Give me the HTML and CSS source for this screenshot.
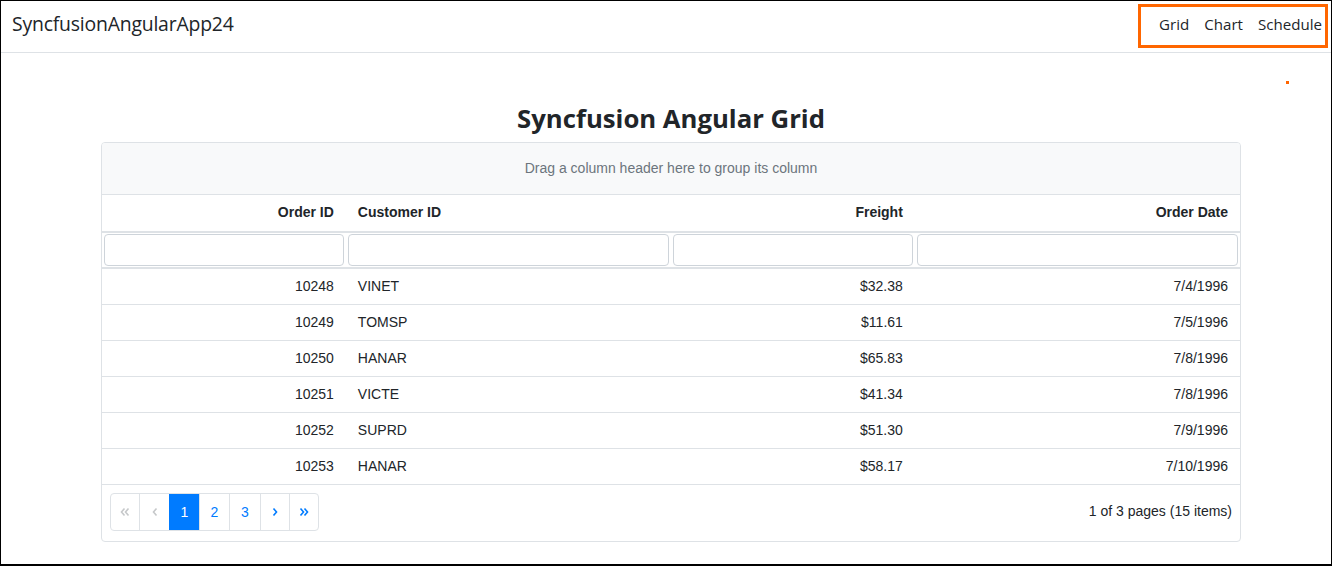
FILE: index.html
```html
<!DOCTYPE html>
<html lang="en">
<head>
<meta charset="utf-8">
<title>SyncfusionAngularApp24</title>
<link rel="stylesheet" href="styles.css">
</head>
<body>
<div class="frame">
  <header class="navbar">
    <a class="brand" href="#">SyncfusionAngularApp24</a>
    <ul class="nav">
      <li><a href="#">Grid</a></li>
      <li><a href="#">Chart</a></li>
      <li><a href="#">Schedule</a></li>
    </ul>
    <span class="dot"></span>
  </header>
  <main class="container">
    <h1 class="title">Syncfusion Angular Grid</h1>
    <div class="grid">
      <div class="group-drop">Drag a column header here to group its column</div>
      <table class="table">
        <colgroup>
          <col class="c3"><col class="c4"><col class="c3"><col class="c4">
        </colgroup>
        <thead>
          <tr class="head-row">
            <th class="r">Order ID</th>
            <th class="l">Customer ID</th>
            <th class="r">Freight</th>
            <th class="r">Order Date</th>
          </tr>
          <tr class="filter-row">
            <td><div class="input"></div></td>
            <td><div class="input"></div></td>
            <td><div class="input"></div></td>
            <td><div class="input"></div></td>
          </tr>
        </thead>
        <tbody>
          <tr><td class="r">10248</td><td class="l">VINET</td><td class="r">$32.38</td><td class="r">7/4/1996</td></tr>
          <tr><td class="r">10249</td><td class="l">TOMSP</td><td class="r">$11.61</td><td class="r">7/5/1996</td></tr>
          <tr><td class="r">10250</td><td class="l">HANAR</td><td class="r">$65.83</td><td class="r">7/8/1996</td></tr>
          <tr><td class="r">10251</td><td class="l">VICTE</td><td class="r">$41.34</td><td class="r">7/8/1996</td></tr>
          <tr><td class="r">10252</td><td class="l">SUPRD</td><td class="r">$51.30</td><td class="r">7/9/1996</td></tr>
          <tr><td class="r">10253</td><td class="l">HANAR</td><td class="r">$58.17</td><td class="r">7/10/1996</td></tr>
        </tbody>
      </table>
      <div class="pager">
        <div class="pages">
          <span class="pg dis first"><svg width="10" height="10" viewBox="0 0 10 10"><polyline points="4.5,1.5 1.5,5 4.5,8.5" /><polyline points="8.5,1.5 5.5,5 8.5,8.5" /></svg></span>
          <span class="pg dis"><svg width="10" height="10" viewBox="0 0 10 10"><polyline points="6.5,1.5 3.5,5 6.5,8.5" /></svg></span>
          <span class="pg active">1</span>
          <span class="pg">2</span>
          <span class="pg wide">3</span>
          <span class="pg narrow"><svg width="10" height="10" viewBox="0 0 10 10"><polyline points="3.5,1.5 6.5,5 3.5,8.5" /></svg></span>
          <span class="pg narrow"><svg width="10" height="10" viewBox="0 0 10 10"><polyline points="1.5,1.5 4.5,5 1.5,8.5" /><polyline points="5.5,1.5 8.5,5 5.5,8.5" /></svg></span>
        </div>
        <div class="info">1 of 3 pages (15 items)</div>
      </div>
    </div>
  </main>
</div>
</body>
</html>
```

FILE: styles.css
```css
* { box-sizing: border-box; }
html, body { margin: 0; padding: 0; background: #fff; }
body {
  font-family: "Open Sans", "Noto Sans", sans-serif;
  color: #212529;
}
.frame {
  width: 1332px;
  height: 566px;
  border: 1px solid #000;
  border-bottom-width: 2px;
  overflow: hidden;
}
.navbar {
  position: relative;
  height: 52px;
  border-bottom: 1px solid #dee2e6;
  display: flex;
  align-items: flex-start;
  justify-content: space-between;
  padding: 3px 3px 0 11px;
}
.brand {
  font-size: 19.4px;
  line-height: 40px;
  color: #212529;
  text-decoration: none;
  letter-spacing: -0.2px;
}
.nav {
  list-style: none;
  margin: 0;
  padding: 0 0 4px 0;
  width: 190px;
  height: 44px;
  border: 3px solid #ff6600;
  display: flex;
  align-items: center;
  justify-content: flex-end;
}
.nav a {
  display: block;
  padding: 0 7.5px;
  font-size: 15.1px;
  color: #212529;
  text-decoration: none;
}
.nav li:last-child a { padding-right: 3px; }
.dot {
  position: absolute;
  left: 1285px;
  top: 80px;
  width: 3px;
  height: 3px;
  background: #ff6600;
}
.container {
  width: 1140px;
  margin-left: 100px;
}
.title {
  margin: 0;
  padding-top: 49px;
  height: 89px;
  text-align: center;
  font-size: 25.7px;
  line-height: 34px;
  font-weight: 700;
  color: #212529;
}
.grid {
  border: 1px solid #dee2e6;
  border-radius: 4px;
  font-family: "Liberation Sans", Arial, sans-serif;
  font-size: 14px;
  overflow: hidden;
}
.group-drop {
  height: 52px;
  background: #f8f9fa;
  border-bottom: 1px solid #dee2e6;
  color: #6c757d;
  text-align: center;
  line-height: 50px;
}
.table {
  width: 100%;
  border-collapse: collapse;
  table-layout: fixed;
}
.c3 { width: 21.43%; }
.c4 { width: 28.57%; }
.table th, .table td {
  padding: 0 12px;
  white-space: nowrap;
}
.r { text-align: right; }
.l { text-align: left; }
.head-row th {
  height: 37px;
  font-weight: 700;
  color: #212529;
  border-bottom: 2px solid #dee2e6;
  padding-bottom: 2px;
}
.filter-row td {
  height: 36px;
  padding: 1px 2px 1px 2px;
  border-bottom: 2px solid #dee2e6;
}
.input {
  height: 32px;
  border: 1px solid #ced4da;
  border-radius: 4px;
  background: #fff;
}
tbody td {
  height: 36px;
  border-bottom: 1px solid #dee2e6;
  color: #212529;
  padding-top: 1px;
}
.pager {
  height: 56px;
  display: flex;
  align-items: center;
  justify-content: space-between;
  padding: 0 8px 2px 8px;
}
.pages {
  display: flex;
  border: 1px solid #dee2e6;
  border-radius: 4px;
  overflow: hidden;
  height: 38px;
}
.pg {
  width: 30px;
  display: flex;
  align-items: center;
  justify-content: center;
  color: #007bff;
  border-left: 1px solid #dee2e6;
}
.pg.first { border-left: none; width: 28px; }
.pg.wide { width: 31px; }
.pg.narrow { width: 29px; }
.pg svg polyline {
  fill: none;
  stroke: #007bff;
  stroke-width: 1.6;
}
.pg.dis svg polyline { stroke: #c6c8ca; }
.pg.active {
  background: #007bff;
  color: #fff;
  border-left-color: #007bff;
}
.info {
  color: #212529;
  padding-bottom: 1px;
}
```
